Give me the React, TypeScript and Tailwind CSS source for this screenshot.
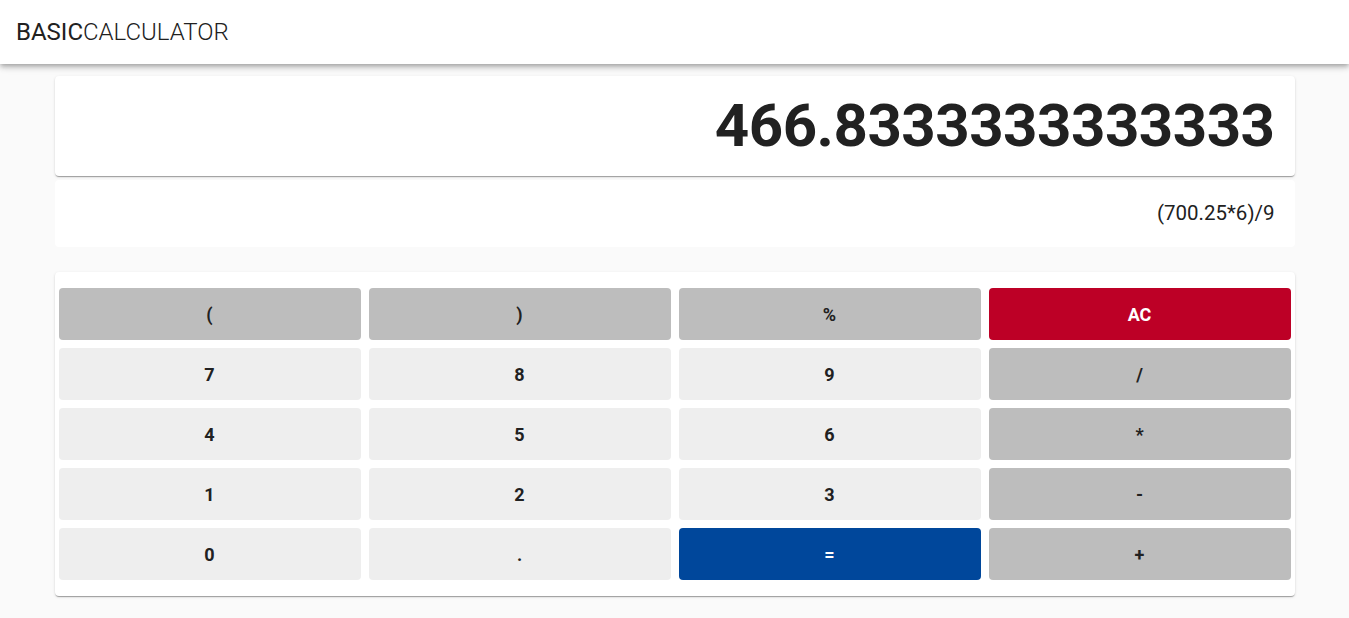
const keys = [
  { label: "(", tone: "op" },
  { label: ")", tone: "op" },
  { label: "%", tone: "op" },
  { label: "AC", tone: "clear" },
  { label: "7", tone: "num" },
  { label: "8", tone: "num" },
  { label: "9", tone: "num" },
  { label: "/", tone: "op" },
  { label: "4", tone: "num" },
  { label: "5", tone: "num" },
  { label: "6", tone: "num" },
  { label: "*", tone: "op" },
  { label: "1", tone: "num" },
  { label: "2", tone: "num" },
  { label: "3", tone: "num" },
  { label: "-", tone: "op" },
  { label: "0", tone: "num" },
  { label: ".", tone: "num" },
  { label: "=", tone: "equals" },
  { label: "+", tone: "op" },
];

const toneClasses: Record<string, string> = {
  num: "bg-[#eeeeee] text-[#212121]",
  op: "bg-[#bdbdbd] text-[#212121]",
  clear: "bg-[#bd0026] text-white",
  equals: "bg-[#00479b] text-white",
};

export default function App() {
  return (
    <div className="min-h-screen bg-[#fafafa] font-['Roboto',sans-serif]">
      {/* App bar */}
      <header className="h-16 bg-white flex items-center px-4 shadow-[0_2px_4px_-1px_rgba(0,0,0,0.2),0_4px_5px_0_rgba(0,0,0,0.14),0_1px_10px_0_rgba(0,0,0,0.12)]">
        <h1 className="text-[24px] text-[#212121] leading-none">
          <span className="font-normal">BASIC</span>
          <span className="font-light">CALCULATOR</span>
        </h1>
      </header>

      <main className="w-[1240px] mx-auto pt-3">
        {/* Result */}
        <div className="h-[100px] bg-white rounded flex items-center justify-end px-5 shadow-[0_2px_1px_-1px_rgba(0,0,0,0.2),0_1px_1px_0_rgba(0,0,0,0.14),0_1px_3px_0_rgba(0,0,0,0.12)]">
          <span className="text-[60px] font-bold text-[#212121] leading-none tracking-[-0.5px]">
            466.8333333333333
          </span>
        </div>

        {/* Expression */}
        <div className="mt-1 h-[67px] bg-white rounded flex items-center justify-end px-5">
          <span className="text-[20.5px] text-[#212121]">(700.25*6)/9</span>
        </div>

        {/* Keypad */}
        <div className="mt-[25px] bg-white rounded px-1 py-4 grid grid-cols-4 gap-2 shadow-[0_2px_1px_-1px_rgba(0,0,0,0.2),0_1px_1px_0_rgba(0,0,0,0.14),0_1px_3px_0_rgba(0,0,0,0.12)]">
          {keys.map((k) => (
            <button
              key={k.label}
              className={`h-[52px] rounded text-[18px] font-bold flex items-center justify-center ${toneClasses[k.tone]}`}
            >
              {k.label}
            </button>
          ))}
        </div>
      </main>
    </div>
  );
}
